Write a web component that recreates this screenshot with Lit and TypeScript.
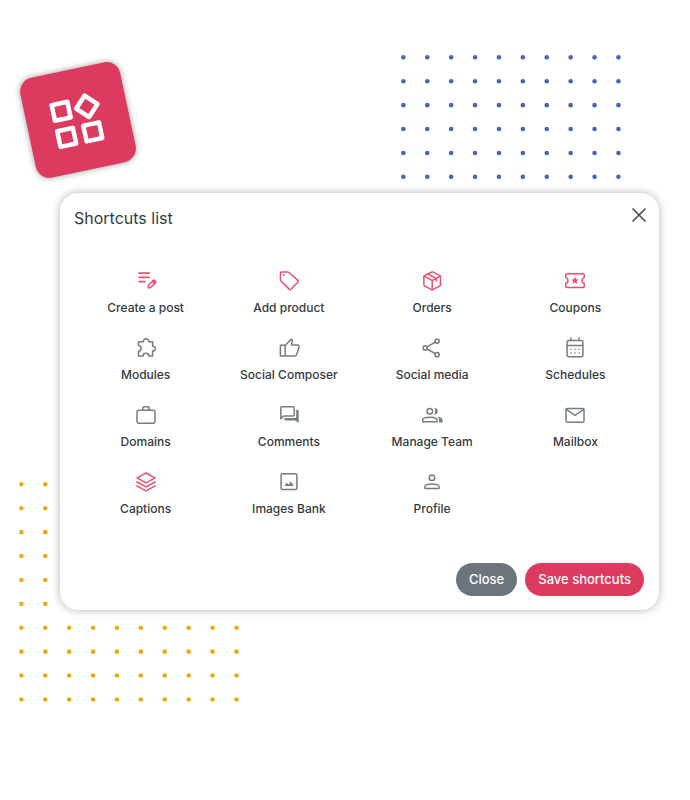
import { LitElement, html, svg, css, type SVGTemplateResult } from "lit";
import { customElement, property, state } from "lit/decorators.js";
import { classMap } from "lit/directives/class-map.js";

const icons: Record<string, SVGTemplateResult> = {
  post: svg`<path stroke-width="1.7" stroke-linecap="butt" d="M4.5 4.2H15.8M4.5 8.4H15.8M4.5 12.6H11.5"/>
    <path d="M14.2 18.8V16.5L19 11.7L21.2 13.9L16.4 18.7Z"/>
    <path fill="currentColor" d="M18.4 12.3L19.4 11.3Q20 10.8 20.6 11.3L21.6 12.3Q22 13 21.5 13.5L20.5 14.5Z"/>`,
  tag: svg`<path d="M4.8 2.9H10.4Q11.3 2.9 12 3.5L20.8 11.4Q21.7 12.3 20.8 13.2L14 20.2Q13.1 21 12.2 20.1L4 12Q3.4 11.3 3.4 10.4V4.3Q3.4 2.9 4.8 2.9Z"/>
    <circle cx="6.7" cy="6" r="1.1" fill="currentColor" stroke="none"/>`,
  box: svg`<path d="M11.4 3.1Q12.2 2.6 13 3.1L19.8 6.7Q20.5 7.1 20.5 7.9V15.8Q20.5 16.5 19.8 16.9L13 20.6Q12.2 21 11.4 20.6L4.6 16.9Q3.9 16.5 3.9 15.8V7.9Q3.9 7.1 4.6 6.7Z"/>
    <path d="M4.2 7.2L12.2 11.6L20.2 7.2M12.2 11.6V20.6M8 5L16.2 9.4V12"/>`,
  ticket: svg`<path d="M4.2 4.7H19.8Q21.3 4.7 21.3 6.2V8.6C18.2 9.5 18.2 13.6 21.3 14.5V16.9Q21.3 18.4 19.8 18.4H4.2Q2.7 18.4 2.7 16.9V14.5C5.8 13.6 5.8 9.5 2.7 8.6V6.2Q2.7 4.7 4.2 4.7Z"/>
    <path fill="currentColor" stroke="none" d="M12 7.6L13.1 10.2L15.8 10.4L13.7 12.2L14.4 14.9L12 13.4L9.6 14.9L10.3 12.2L8.2 10.4L10.9 10.2Z"/>`,
  puzzle: svg`<path d="M5 5.7H9.4C8.9 1.9 15.2 1.9 14.8 5.7H18.6V10.2C22.2 9.8 22.2 15.4 18.6 15V19.9H14.8C14.8 16.5 9.2 16.5 9.2 19.9H4.5V15.2C8 15.2 8 9.6 4.5 9.6V6.2Q4.5 5.7 5 5.7Z"/>`,
  thumb: svg`<path d="M3.4 9.3H8.2V20H3.4ZM8.2 9.5L14 3.3Q15.6 3.4 15.3 5L14.5 8.9H20.6Q22.4 8.9 22.1 10.8L19.7 18.5Q19.2 20 17.6 20H8.2"/>`,
  share: svg`<circle cx="5.2" cy="11.9" r="2.1"/><circle cx="17.1" cy="5.1" r="2.1"/><circle cx="17.1" cy="18.7" r="2.1"/>
    <path d="M7.1 10.8L15.2 6.2M7.1 13L15.2 17.6"/>`,
  calendar: svg`<rect x="4.1" y="4.5" width="15.8" height="16.2" rx="1.4"/><path d="M4.1 9.6H19.9M7.9 2V4.5M16.1 2V4.5"/>
    <path stroke-width="1.6" d="M7.9 13.3h.01M12 13.3h.01M16.1 13.3h.01M7.9 17h.01M12 17h.01M16.1 17h.01"/>`,
  briefcase: svg`<rect x="3" y="7.2" width="18" height="13" rx="1.6"/><path d="M8.8 7V5.3Q8.8 3.8 10.3 3.8H13.7Q15.2 3.8 15.2 5.3V7"/>`,
  forum: svg`<path d="M5 3.7H16Q17.2 3.7 17.2 4.9V11.7Q17.2 12.9 16 12.9H6.8L3.8 15.8V4.9Q3.8 3.7 5 3.7Z"/>
    <path fill="currentColor" stroke="none" d="M19.2 6.8H20.2Q21.7 6.8 21.7 8.3V20L18.3 17.5H8.8Q7.3 17.5 7.3 16V15H19.2Z"/>`,
  team: svg`<circle cx="9.8" cy="8.2" r="2.8"/><path d="M2.6 18.8V17.1C2.6 13.3 17 13.3 17 17.1V18.8Z"/>
    <path fill="currentColor" stroke="none" d="M14.1 5C19 4.5 19 11.9 14.1 11.4C15.7 9.5 15.7 6.9 14.1 5ZM17.6 13.7C21 14.2 22.6 15.4 22.6 17.2V19.4H19V17.1C19 15.7 18.5 14.6 17.6 13.7Z"/>`,
  mail: svg`<rect x="3" y="5.4" width="18" height="13.8" rx="1.4"/><path d="M3.4 6.3L12 12.3L20.6 6.3"/>`,
  layers: svg`<path d="M12 3L21 7.8L12 12.9L3 7.8ZM2.8 12L12 16.9L21.2 12M2.8 15.9L12 20.9L21.2 15.9"/>`,
  image: svg`<rect x="4.1" y="3.8" width="15.8" height="15.8" rx="1.4"/>
    <path fill="currentColor" stroke="none" d="M7.4 16L9.9 12.7L11.6 14.8L13.8 11.6L16.8 16Z"/>`,
  profile: svg`<circle cx="12" cy="7.8" r="2.8"/><path d="M4.9 18.4V16.8C4.9 13 19.1 13 19.1 16.8V18.4Z"/>`,
  close: svg`<path stroke-width="1.7" d="M6 6L18 18M18 6L6 18"/>`,
};

interface Shortcut {
  label: string;
  icon: string;
  selected: boolean;
}

@customElement("line-icon")
export class LineIcon extends LitElement {
  static styles = css`
    :host { display: block; width: 24px; height: 24px; }
    .icon {
      display: block;
      width: 100%;
      height: 100%;
      fill: none;
      stroke: currentColor;
      stroke-width: 1.5;
      stroke-linecap: round;
      stroke-linejoin: round;
    }
  `;

  @property() name = "";

  render() {
    return html`<svg class="icon" viewBox="0 0 24 24" aria-hidden="true">${icons[this.name]}</svg>`;
  }
}

@customElement("dot-grid")
export class DotGrid extends LitElement {
  static styles = css`
    :host { display: block; width: 239px; height: 239px; }
    .dots { display: block; width: 100%; height: 100%; fill: currentColor; }
  `;

  render() {
    const steps = Array.from({ length: 10 }, (_, i) => 12.4 + i * 24);
    return html`<svg class="dots" viewBox="0 0 240 240" aria-hidden="true">
      ${steps.map((y) => steps.map((x) => svg`<circle cx=${x} cy=${y} r="2.3"/>`))}
    </svg>`;
  }
}

@customElement("app-root")
export class AppRoot extends LitElement {
  static styles = css`
    :host {
      display: block;
      position: relative;
      box-sizing: border-box;
      min-height: 100vh;
      padding: 193px 31px 80px 60px;
      overflow: hidden;
      background: #fff;
      color: #343a40;
      font-family: Inter, "Liberation Sans", sans-serif;
    }
    button {
      margin: 0;
      padding: 0;
      border: 0;
      background: none;
      color: inherit;
      font: inherit;
      cursor: pointer;
    }
    .dots-blue { position: absolute; top: 45px; right: 60px; color: #3a6eb5; }
    .dots-gold { position: absolute; top: 472px; left: 9px; color: #efaa0c; }
    .badge {
      position: absolute;
      top: 69px;
      left: 27px;
      display: grid;
      place-items: center;
      width: 102px;
      height: 102px;
      border-radius: 14px;
      background: #dc3a5f;
      box-shadow: 0 0 6px rgba(0, 0, 0, 0.4);
      transform: rotate(-12deg);
    }
    .badge-icon {
      width: 64px;
      height: 64px;
      fill: none;
      stroke: #fff;
      stroke-width: 1.7;
      stroke-linejoin: round;
    }
    .card {
      position: relative;
      padding: 13px 12px 14px 14px;
      border-radius: 18px;
      background: #fff;
      box-shadow: 0 0 8px rgba(0, 0, 0, 0.3);
    }
    .header {
      display: flex;
      align-items: flex-start;
      justify-content: space-between;
      margin-bottom: 39px;
    }
    .title {
      margin: 0;
      font-size: 16px;
      line-height: 24px;
      font-weight: 400;
    }
    .dismiss { margin-right: -4px; color: #495057; }
    .dismiss line-icon { margin-top: -3px; }
    .grid {
      display: grid;
      grid-template-columns: repeat(4, 1fr);
      row-gap: 19px;
      margin: 0;
      padding: 0;
      list-style: none;
    }
    .tile {
      display: flex;
      flex-direction: column;
      align-items: center;
      gap: 6px;
      width: 100%;
      font-size: 12px;
      line-height: 18px;
      font-weight: 500;
    }
    .tile line-icon { color: #757d84; }
    .tile.selected line-icon { color: #e84f73; }
    .footer {
      display: flex;
      justify-content: flex-end;
      gap: 8px;
      margin-top: 45px;
      padding-right: 3px;
    }
    .action {
      height: 33px;
      padding: 0 13px 2px;
      border-radius: 17px;
      color: #fff;
      font-size: 13px;
      font-weight: 500;
    }
    .secondary { background: #6c757d; }
    .primary { background: #dc3a5f; }
  `;

  @state() private shortcuts: Shortcut[] = [
    { label: "Create a post", icon: "post", selected: true },
    { label: "Add product", icon: "tag", selected: true },
    { label: "Orders", icon: "box", selected: true },
    { label: "Coupons", icon: "ticket", selected: true },
    { label: "Modules", icon: "puzzle", selected: false },
    { label: "Social Composer", icon: "thumb", selected: false },
    { label: "Social media", icon: "share", selected: false },
    { label: "Schedules", icon: "calendar", selected: false },
    { label: "Domains", icon: "briefcase", selected: false },
    { label: "Comments", icon: "forum", selected: false },
    { label: "Manage Team", icon: "team", selected: false },
    { label: "Mailbox", icon: "mail", selected: false },
    { label: "Captions", icon: "layers", selected: true },
    { label: "Images Bank", icon: "image", selected: false },
    { label: "Profile", icon: "profile", selected: false },
  ];

  private toggle(index: number) {
    this.shortcuts = this.shortcuts.map((s, i) => (i === index ? { ...s, selected: !s.selected } : s));
  }

  render() {
    return html`
      <dot-grid class="dots-blue"></dot-grid>
      <dot-grid class="dots-gold"></dot-grid>
      <div class="badge">
        <svg class="badge-icon" viewBox="0.5 -0.5 24 24" aria-hidden="true">
          <rect x="4" y="4" width="6" height="6" />
          <rect x="4" y="14" width="6" height="6" />
          <rect x="14" y="14" width="6" height="6" />
          <path d="M16.8 3.1L20.9 7.2L16.8 11.3L12.7 7.2Z" />
        </svg>
      </div>
      <section class="card" role="dialog" aria-labelledby="title">
        <header class="header">
          <h1 class="title" id="title">Shortcuts list</h1>
          <button class="dismiss" type="button" aria-label="Dismiss"><line-icon name="close"></line-icon></button>
        </header>
        <ul class="grid">
          ${this.shortcuts.map(
            (s, i) => html`<li>
              <button
                type="button"
                class=${classMap({ tile: true, selected: s.selected })}
                aria-pressed=${s.selected ? "true" : "false"}
                @click=${() => this.toggle(i)}
              >
                <line-icon name=${s.icon}></line-icon>
                <span>${s.label}</span>
              </button>
            </li>`
          )}
        </ul>
        <footer class="footer">
          <button class="action secondary" type="button">Close</button>
          <button class="action primary" type="button">Save shortcuts</button>
        </footer>
      </section>
    `;
  }
}
